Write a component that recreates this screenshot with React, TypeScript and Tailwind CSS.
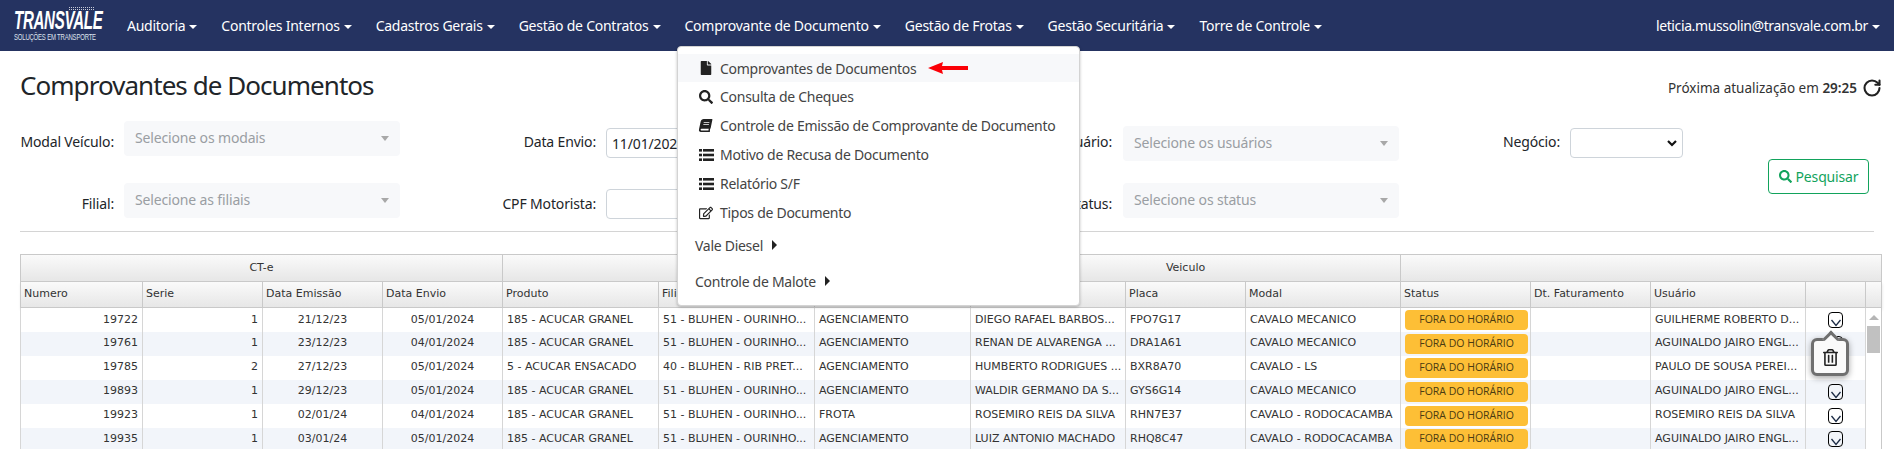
import { FaBook, FaFile, FaRegEdit, FaRegTrashAlt, FaSearch } from "react-icons/fa";
import { RotateCw } from "lucide-react";

const menus = [
  "Auditoria",
  "Controles Internos",
  "Cadastros Gerais",
  "Gestão de Contratos",
  "Comprovante de Documento",
  "Gestão de Frotas",
  "Gestão Securitária",
  "Torre de Controle",
];

const ListIcon = () => (
  <svg width="15" height="12" viewBox="0 0 15 12" fill="#222">
    <rect x="0" y="0" width="3" height="2.6" />
    <rect x="4" y="0" width="11" height="2.6" />
    <rect x="0" y="4.7" width="3" height="2.6" />
    <rect x="4" y="4.7" width="11" height="2.6" />
    <rect x="0" y="9.4" width="3" height="2.6" />
    <rect x="4" y="9.4" width="11" height="2.6" />
  </svg>
);

const dropdownItems = [
  { icon: <FaSearch size={14} />, label: "Consulta de Cheques" },
  { icon: <FaBook size={13} className="-skew-x-12" />, label: "Controle de Emissão de Comprovante de Documento" },
  { icon: <ListIcon />, label: "Motivo de Recusa de Documento" },
  { icon: <ListIcon />, label: "Relatório S/F" },
  { icon: <FaRegEdit size={14} />, label: "Tipos de Documento" },
];

const columns = [
  { title: "Numero", width: "w-[122px]", align: "text-right" },
  { title: "Serie", width: "w-[120px]", align: "text-right" },
  { title: "Data Emissão", width: "w-[120px]", align: "text-center" },
  { title: "Data Envio", width: "w-[120px]", align: "text-center" },
  { title: "Produto", width: "w-[156px]", align: "text-left" },
  { title: "Filial", width: "w-[156px]", align: "text-left" },
  { title: "Tipo", width: "w-[156px]", align: "text-left" },
  { title: "Motorista", width: "w-[155px]", align: "text-left" },
  { title: "Placa", width: "w-[120px]", align: "text-left" },
  { title: "Modal", width: "w-[155px]", align: "text-left" },
  { title: "Status", width: "w-[130px]", align: "text-left" },
  { title: "Dt. Faturamento", width: "w-[120px]", align: "text-left" },
  { title: "Usuário", width: "w-[155px]", align: "text-left" },
  { title: "", width: "w-[60px]", align: "text-center" },
  { title: "", width: "w-[16px]", align: "text-center" },
];

const acucar = "185 - ACUCAR GRANEL";
const ourinhos = "51 - BLUHEN - OURINHO...";
const agenc = "AGENCIAMENTO";
const aguinaldo = "AGUINALDO JAIRO ENGL...";

const rows = [
  ["19722", "1", "21/12/23", "05/01/2024", acucar, ourinhos, agenc, "DIEGO RAFAEL BARBOS...", "FPO7G17", "CAVALO MECANICO", "GUILHERME ROBERTO D..."],
  ["19761", "1", "23/12/23", "04/01/2024", acucar, ourinhos, agenc, "RENAN DE ALVARENGA ...", "DRA1A61", "CAVALO MECANICO", aguinaldo],
  ["19785", "2", "27/12/23", "05/01/2024", "5 - ACUCAR ENSACADO", "40 - BLUHEN - RIB PRET...", agenc, "HUMBERTO RODRIGUES ...", "BXR8A70", "CAVALO - LS", "PAULO DE SOUSA PEREI..."],
  ["19893", "1", "29/12/23", "05/01/2024", acucar, ourinhos, agenc, "WALDIR GERMANO DA S...", "GYS6G14", "CAVALO MECANICO", aguinaldo],
  ["19923", "1", "02/01/24", "04/01/2024", acucar, ourinhos, "FROTA", "ROSEMIRO REIS DA SILVA", "RHN7E37", "CAVALO - RODOCACAMBA", "ROSEMIRO REIS DA SILVA"],
  ["19935", "1", "03/01/24", "05/01/2024", acucar, ourinhos, agenc, "LUIZ ANTONIO MACHADO", "RHQ8C47", "CAVALO - RODOCACAMBA", aguinaldo],
];

const Caret = () => (
  <span className="ml-[4px] inline-block border-x-[4px] border-t-[4px] border-x-transparent border-t-white align-middle" />
);

const Logo = () => (
  <div className="relative ml-[14px] flex w-[82px] flex-col text-white">
    <span className="h-[23px] origin-left scale-x-[0.58] whitespace-nowrap font-['Liberation_Sans'] text-[26px] font-bold italic leading-[23px] tracking-[-0.5px]">
      TRANSVALE
    </span>
    <span className="mt-[1px] origin-left scale-x-[0.7] whitespace-nowrap font-['Liberation_Sans'] text-[8.5px] leading-[9px] text-[#dfe3ee]">
      SOLUÇÕES EM TRANSPORTE
    </span>
    <div className="absolute left-[55px] top-[-2px] h-[3px] w-[25px] border-y border-dotted border-[#c5c9d6]" />
  </div>
);

const FakeSelect = ({ text, className }: { text: string; className: string }) => (
  <div className={`flex h-[35px] w-[276px] items-center justify-between rounded bg-[#f7f8fa] pl-[11px] pr-[11px] text-[14px] text-[#9a9ea3] ${className}`}>
    <span className="-translate-y-[1px]">{text}</span>
    <span className="border-x-[4px] border-t-[5px] border-x-transparent border-t-[#a8a8a8]" />
  </div>
);

const RowActionIcon = () => (
  <span className="mx-auto flex h-[16px] w-[15px] items-end justify-center rounded-[4px] border border-black">
    <svg width="12" height="8" viewBox="0 0 12 8" fill="none" stroke="#1b2b45" strokeWidth="1.3">
      <path d="M1.5 1 L6 6.5 L10.5 1" />
    </svg>
  </span>
);

const App = () => {
  return (
    <div className="relative h-[449px] w-[1894px] overflow-hidden bg-white font-['Noto_Sans',sans-serif] text-[#212529]">
      <nav className="flex h-[51px] items-center bg-[#253361] text-[14px] tracking-[-0.25px] text-white">
        <Logo />
        <ul className="ml-[31px] flex gap-[24px]">
          {menus.map((m) => (
            <li key={m} className="whitespace-nowrap">
              {m}
              <Caret />
            </li>
          ))}
        </ul>
        <div className="ml-auto mr-[14px] whitespace-nowrap tracking-[-0.38px]">
          leticia.mussolin@transvale.com.br
          <Caret />
        </div>
      </nav>

      <div className="flex items-start justify-between pl-[20px] pr-[12px] pt-[12px]">
        <h1 className="text-[26px] font-normal leading-[44px] tracking-[-0.95px]">Comprovantes de Documentos</h1>
        <div className="mt-[15px] flex items-center gap-[5px] text-[13.5px] text-[#333]">
          <span>
            Próxima atualização em <b className="font-semibold">29:25</b>
          </span>
          <RotateCw size={20} strokeWidth={2.5} className="text-[#222]" />
        </div>
      </div>

      <div className="mt-[14px] flex pl-[20px] text-[14px] tracking-[-0.15px]">
        <div className="grid grid-cols-[104px_276px_206px_194px_323px_276px_171px_113px] grid-rows-[62px_36px]">
          <span className="mt-[10px] pr-[10px] text-right">Modal Veículo:</span>
          <FakeSelect text="Selecione os modais" className="" />
          <span className="mt-[10px] pr-[10px] text-right">Data Envio:</span>
          <div className="mt-[7px] flex h-[30px] items-center rounded border border-[#ced4da] pl-[5px]">11/01/2024</div>
          <span className="mt-[10px] pr-[11px] text-right">Usuário:</span>
          <FakeSelect text="Selecione os usuários" className="mt-[5px]" />
          <span className="mt-[10px] pr-[10px] text-right">Negócio:</span>
          <div className="mt-[7px] flex h-[30px] items-center justify-end rounded border border-[#ced4da] pr-[5px]">
            <svg width="10" height="7" viewBox="0 0 10 7" fill="none" stroke="#111" strokeWidth="2.2">
              <path d="M1 1 L5 5 L9 1" />
            </svg>
          </div>

          <span className="mt-[10px] pr-[10px] text-right">Filial:</span>
          <FakeSelect text="Selecione as filiais" className="" />
          <span className="mt-[10px] pr-[10px] text-right">CPF Motorista:</span>
          <div className="mt-[6px] h-[30px] rounded border border-[#ced4da]" />
          <span className="mt-[10px] pr-[11px] text-right">Status:</span>
          <FakeSelect text="Selecione os status" className="" />
        </div>
        <button className="ml-[85px] mt-[38px] flex h-[35px] w-[101px] items-center justify-center gap-[4px] rounded border border-[#12a35c] text-[14px] text-[#12a35c]">
          <FaSearch size={13} />
          Pesquisar
        </button>
      </div>

      <hr className="ml-[20px] mr-[20px] mt-[12px] border-[#d4d4d4]" />

      <table className="ml-[20px] mt-[22px] w-[1862px] table-fixed border-collapse border border-[#c9c9c9] font-['DejaVu_Sans',sans-serif] text-[11px] text-[#333]">
        <colgroup>
          {columns.map((c, i) => (
            <col key={i} className={c.width} />
          ))}
        </colgroup>
        <thead>
          <tr className="h-[27px] bg-gradient-to-b from-[#fafafa] to-[#e6e6e6]">
            <th colSpan={4} className="border border-[#c9c9c9] font-normal">CT-e</th>
            <th colSpan={3} className="border border-[#c9c9c9] font-normal" />
            <th colSpan={3} className="border border-[#c9c9c9] font-normal">Veiculo</th>
            <th colSpan={5} className="border border-[#c9c9c9] font-normal" />
          </tr>
          <tr className="h-[26px] bg-gradient-to-b from-[#fafafa] to-[#e6e6e6] shadow-[0_2px_3px_rgba(0,0,0,0.12)]">
            {columns.map((c, i) => (
              <th key={i} className="border border-[#c9c9c9] px-[3px] text-left font-normal">
                {c.title}
              </th>
            ))}
          </tr>
        </thead>
        <tbody>
          {rows.map((r, i) => (
            <tr key={r[0]} className={`h-[24px] ${i % 2 ? "bg-[#f2f5fa]" : "bg-white"}`}>
              {r.slice(0, 10).map((cell, j) => (
                <td key={j} className={`overflow-hidden whitespace-nowrap border-x border-[#d6d6d6] px-[4px] ${columns[j].align}`}>
                  {cell}
                </td>
              ))}
              <td className="border-x border-[#d6d6d6] px-[4px]">
                <span className="flex h-[20px] w-[123px] items-center justify-center rounded bg-[#fdbf36] font-['Open_Sans',sans-serif] text-[10.5px] text-[#4a3b12]">
                  FORA DO HORÁRIO
                </span>
              </td>
              <td className="border-x border-[#d6d6d6]" />
              <td className="overflow-hidden whitespace-nowrap border-x border-[#d6d6d6] px-[4px]">{r[10]}</td>
              <td className="border-x border-[#d6d6d6]">
                <RowActionIcon />
              </td>
              {i === 0 && (
                <td rowSpan={6} className="bg-white align-top">
                  <div className="mx-auto mt-[7px] h-0 w-0 border-x-[5px] border-b-[5px] border-x-transparent border-b-[#b5b5b5]" />
                  <div className="mx-auto mt-[6px] h-[27px] w-[13px] bg-[#c1c1c1]" />
                </td>
              )}
            </tr>
          ))}
        </tbody>
      </table>

      {/* menu aberto sobre a tabela */}
      <div className="absolute left-[677px] top-[46px] h-[260px] w-[403px] rounded border border-[#d3d3d3] bg-white pt-[7px] text-[14px] tracking-[-0.28px] text-[#444] shadow-[0_1px_3px_rgba(0,0,0,0.25)]">
        <div className="flex h-[28px] items-center bg-[#f7f8fa] pl-[21px]">
          <span className="w-[21px] text-[#222]"><FaFile size={14} /></span>
          Comprovantes de Documentos
          <svg className="ml-[12px]" width="41" height="14" viewBox="0 0 41 14">
            <path d="M0 7 L15 1 L14 5 L40 5 L40 9 L14 9 L15 13 Z" fill="#fb0007" />
          </svg>
        </div>
        {dropdownItems.map((d) => (
          <div key={d.label} className="flex h-[29px] items-center pl-[21px]">
            <span className="w-[21px] text-[#222]">{d.icon}</span>
            {d.label}
          </div>
        ))}
        <div className="flex h-[36px] items-center pl-[17px]">
          Vale Diesel
          <span className="ml-[9px] border-y-[5px] border-l-[5px] border-y-transparent border-l-[#222]" />
        </div>
        <div className="flex h-[36px] items-center pl-[17px]">
          Controle de Malote
          <span className="ml-[9px] border-y-[5px] border-l-[5px] border-y-transparent border-l-[#222]" />
        </div>
      </div>

      {/* popover da linha */}
      <div className="absolute left-[1811px] top-[338px] flex h-[38px] w-[38px] items-center justify-center rounded-[6px] border-[3px] border-[#6f6f6f] bg-[#fafafa] shadow-[0_2px_6px_rgba(0,0,0,0.35)]">
        <span className="absolute left-[11px] top-[-8px] h-[12px] w-[12px] rotate-45 border-l-[3px] border-t-[3px] border-[#6f6f6f] bg-[#fafafa]" />
        <FaRegTrashAlt size={17} className="relative text-[#222]" />
      </div>
    </div>
  );
};

export default App;
